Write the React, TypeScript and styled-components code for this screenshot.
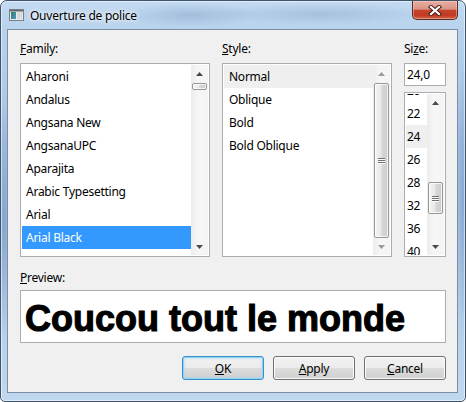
import React from 'react';
import styled, { createGlobalStyle } from 'styled-components';

const UI_FONT = `"Noto Sans", "Open Sans", "Liberation Sans", sans-serif`;

const GlobalStyle = createGlobalStyle`
  html, body { margin: 0; padding: 0; background: #ffffff; }
  body { font-family: ${UI_FONT}; font-size: 12px; color: #000; letter-spacing: -0.25px; }
  * { box-sizing: border-box; }
`;

const Window = styled.div`
  width: 466px;
  height: 402px;
  border: 1px solid #3f536c;
  border-radius: 7px 7px 5px 5px;
  overflow: hidden;
  display: flex;
  flex-direction: column;
  box-shadow: inset 0 0 0 1px rgba(255, 255, 255, 0.55);
  background:
    radial-gradient(ellipse 70px 12px at 190px 14px, rgba(80, 115, 160, 0.25), transparent),
    radial-gradient(ellipse 110px 11px at 320px 13px, rgba(80, 115, 160, 0.22), transparent),
    radial-gradient(ellipse 8px 120px at 3px 220px, rgba(70, 110, 170, 0.4), transparent),
    radial-gradient(ellipse 8px 140px at 462px 200px, rgba(70, 110, 170, 0.35), transparent),
    linear-gradient(to bottom, #c2daf1 0px, #b8d2ed 30px, #a6c4e4 140px, #b3cee9 300px, #c0d8ef 402px);
`;

const TitleBar = styled.div`
  height: 28px;
  flex: none;
  display: flex;
  align-items: center;
  padding-left: 7px;
`;

const TitleText = styled.span`
  margin-left: 6px;
  font-family: ${UI_FONT};
  font-size: 12px;
  color: #000;
  text-shadow: 0 0 6px rgba(255, 255, 255, 0.95), 0 0 3px rgba(255, 255, 255, 0.9);
`;

const CloseButton = styled.div`
  align-self: flex-start;
  margin-left: auto;
  margin-right: 7px;
  width: 46px;
  height: 19px;
  border: 1px solid #5b2a22;
  border-top: none;
  border-radius: 0 0 5px 5px;
  display: flex;
  align-items: center;
  justify-content: center;
  background: linear-gradient(
    to bottom,
    #e7b0a3 0%,
    #d99384 45%,
    #c6432c 52%,
    #c03a22 80%,
    #d2674a 100%
  );
  box-shadow: inset 0 0 0 1px rgba(255, 210, 200, 0.45);
`;

const Client = styled.div`
  flex: 1;
  margin: 0 7px 8px 6px;
  border: 1px solid #7e8da3;
  background: #f0f0f0;
  padding: 11px 11px 12px 12px;
  display: flex;
  flex-direction: column;
`;

const TopRow = styled.div`
  display: flex;
  gap: 12px;
`;

const Column = styled.div<{ $w: number }>`
  width: ${(p) => p.$w}px;
  display: flex;
  flex-direction: column;
`;

const Label = styled.div<{ $gap: number }>`
  height: 16px;
  line-height: 16px;
  font-size: 12px;
  margin-bottom: ${(p) => p.$gap}px;
  white-space: nowrap;
`;

const Mn = styled.span`
  text-decoration: underline;
  text-underline-offset: 1px;
`;

const ListBox = styled.div<{ $h: number }>`
  height: ${(p) => p.$h}px;
  border: 1px solid #abadb3;
  background: #fff;
  padding: 1px;
  display: flex;
`;

const Rows = styled.div<{ $offset?: number }>`
  flex: 1;
  overflow: hidden;
  display: flex;
  flex-direction: column;
  & > :first-child {
    margin-top: ${(p) => p.$offset ?? 0}px;
  }
`;

const Row = styled.div<{ $state?: 'selected' | 'current'; $pad: number }>`
  flex: none;
  height: 23px;
  line-height: 23px;
  padding-left: ${(p) => p.$pad}px;
  font-size: 12px;
  white-space: nowrap;
  color: ${(p) => (p.$state === 'selected' ? '#fff' : '#000')};
  background: ${(p) =>
    p.$state === 'selected' ? '#3399ff' : p.$state === 'current' ? '#efefef' : 'transparent'};
`;

const Track = styled.div`
  width: 17px;
  flex: none;
  display: flex;
  flex-direction: column;
  background: linear-gradient(to right, #ececec, #f6f6f6 40%, #f4f4f4);
`;

const ArrowBtn = styled.div`
  height: 17px;
  flex: none;
  display: flex;
  align-items: center;
  justify-content: center;
`;

const Thumb = styled.div<{ $h: number; $top: number }>`
  height: ${(p) => p.$h}px;
  margin: ${(p) => p.$top}px 1px 0 1px;
  flex: none;
  border: 1px solid #979797;
  border-radius: 2px;
  background: linear-gradient(to right, #f4f4f4 0%, #e8e8e8 45%, #d6d6d6 55%, #cdcdcd 100%);
  box-shadow: inset 0 0 0 1px rgba(255, 255, 255, 0.75);
  display: flex;
  flex-direction: column;
  align-items: center;
  justify-content: center;
  gap: 1px;
`;

const Grip = styled.div`
  width: 7px;
  height: 1px;
  background: #6f6f6f;
  box-shadow: 0 1px 0 #fdfdfd;
`;

const Spacer = styled.div`
  flex: 1;
`;

const EditBox = styled.div`
  height: 23px;
  border: 1px solid #abadb3;
  background: #fff;
  padding-left: 2px;
  line-height: 21px;
  font-size: 12px;
  margin-bottom: 6px;
`;

const PreviewBox = styled.div`
  height: 53px;
  border: 1px solid #abadb3;
  background: #fff;
  padding: 4px 0 0 4px;
  display: flex;
  align-items: center;
  overflow: hidden;
  white-space: nowrap;
  font-family: "Liberation Sans", Arial, sans-serif;
  font-weight: 700;
  font-size: 36px;
  letter-spacing: 0;
  line-height: 1;
  -webkit-text-stroke: 1.1px #000;
  color: #000;
`;

const SectionLabel = styled(Label)`
  margin-top: 13px;
`;

const ButtonRow = styled.div`
  margin-top: 13px;
  display: flex;
  justify-content: flex-end;
  gap: 9px;
`;

const Button = styled.div<{ $default?: boolean }>`
  width: 82px;
  height: 24px;
  border: 1px solid ${(p) => (p.$default ? '#3c8ec9' : '#707070')};
  border-radius: 3px;
  display: flex;
  align-items: center;
  justify-content: center;
  font-size: 12px;
  background: linear-gradient(to bottom, #f2f2f2 0%, #ebebeb 50%, #dddddd 50%, #cfcfcf 100%);
  box-shadow: ${(p) =>
    p.$default ? 'inset 0 0 0 1px #8fd3f3, inset 0 0 2px 2px rgba(160, 220, 250, 0.5)' : 'inset 0 0 0 1px #fbfbfb'};
`;

const Arrow = ({ dir, color }: { dir: 'up' | 'down'; color: string }) => (
  <svg width="7" height="4" viewBox="0 0 7 4">
    {dir === 'up' ? (
      <polygon points="3.5,0 7,4 0,4" fill={color} />
    ) : (
      <polygon points="0,0 7,0 3.5,4" fill={color} />
    )}
  </svg>
);

const ScrollBar = ({
  top,
  height,
  arrow,
}: {
  top: number;
  height: number;
  arrow: string;
}) => (
  <Track>
    <ArrowBtn>
      <Arrow dir="up" color={arrow} />
    </ArrowBtn>
    <Thumb $h={height} $top={top}>
      {height > 14 && (
        <>
          <Grip />
          <Grip />
          <Grip />
        </>
      )}
    </Thumb>
    <Spacer />
    <ArrowBtn>
      <Arrow dir="down" color={arrow} />
    </ArrowBtn>
  </Track>
);

const AppIcon = () => (
  <svg width="16" height="16" viewBox="0 0 16 16">
    <defs>
      <linearGradient id="ig" x1="0" y1="0" x2="1" y2="1">
        <stop offset="0" stopColor="#2e7d62" />
        <stop offset="1" stopColor="#4f97c7" />
      </linearGradient>
    </defs>
    <rect x="1.5" y="2.5" width="14" height="11" fill="#e9ecef" stroke="#7b7f85" />
    <rect x="2" y="3" width="13" height="1.5" fill="#5d6670" />
    <rect x="3" y="5" width="5" height="7" fill="url(#ig)" />
    <rect x="9" y="5" width="5" height="7" fill="#d5dade" />
  </svg>
);

const CloseGlyph = () => (
  <svg width="14" height="11" viewBox="0 0 14 11">
    <g strokeLinecap="square">
      <path d="M3 2 L11 9 M11 2 L3 9" stroke="#4a1d15" strokeWidth="4.2" />
      <path d="M3 2 L11 9 M11 2 L3 9" stroke="#ffffff" strokeWidth="2.2" />
    </g>
  </svg>
);

const families = [
  'Aharoni',
  'Andalus',
  'Angsana New',
  'AngsanaUPC',
  'Aparajita',
  'Arabic Typesetting',
  'Arial',
  'Arial Black',
];
const styles = ['Normal', 'Oblique', 'Bold', 'Bold Oblique'];
const sizes = ['20', '22', '24', '26', '28', '32', '36', '40', '48'];

export default function App() {
  return (
    <>
      <GlobalStyle />
      <Window>
        <TitleBar>
          <AppIcon />
          <TitleText>Ouverture de police</TitleText>
          <CloseButton>
            <CloseGlyph />
          </CloseButton>
        </TitleBar>
        <Client>
          <TopRow>
            <Column $w={190}>
              <Label $gap={6}>
                <Mn>F</Mn>amily:
              </Label>
              <ListBox $h={194}>
                <Rows>
                  {families.map((f) => (
                    <Row key={f} $pad={4} $state={f === 'Arial Black' ? 'selected' : undefined}>
                      {f}
                    </Row>
                  ))}
                </Rows>
                <ScrollBar top={1} height={7} arrow="#4a4a4a" />
              </ListBox>
            </Column>
            <Column $w={170}>
              <Label $gap={6}>
                <Mn>S</Mn>tyle:
              </Label>
              <ListBox $h={194}>
                <Rows>
                  {styles.map((s) => (
                    <Row key={s} $pad={5} $state={s === 'Normal' ? 'current' : undefined}>
                      {s}
                    </Row>
                  ))}
                </Rows>
                <ScrollBar top={1} height={155} arrow="#9a9a9a" />
              </ListBox>
            </Column>
            <Column $w={42}>
              <Label $gap={6}>
                Si<Mn>z</Mn>e:
              </Label>
              <EditBox>24,0</EditBox>
              <ListBox $h={165}>
                <Rows $offset={-15}>
                  {sizes.map((s) => (
                    <Row key={s} $pad={1} $state={s === '24' ? 'current' : undefined}>
                      {s}
                    </Row>
                  ))}
                </Rows>
                <ScrollBar top={71} height={32} arrow="#4a4a4a" />
              </ListBox>
            </Column>
          </TopRow>
          <SectionLabel $gap={4}>
            <Mn>P</Mn>review:
          </SectionLabel>
          <PreviewBox>Coucou tout le monde</PreviewBox>
          <ButtonRow>
            <Button $default>
              <span>
                <Mn>O</Mn>K
              </span>
            </Button>
            <Button>
              <span>
                <Mn>A</Mn>pply
              </span>
            </Button>
            <Button>
              <span>
                <Mn>C</Mn>ancel
              </span>
            </Button>
          </ButtonRow>
        </Client>
      </Window>
    </>
  );
}
